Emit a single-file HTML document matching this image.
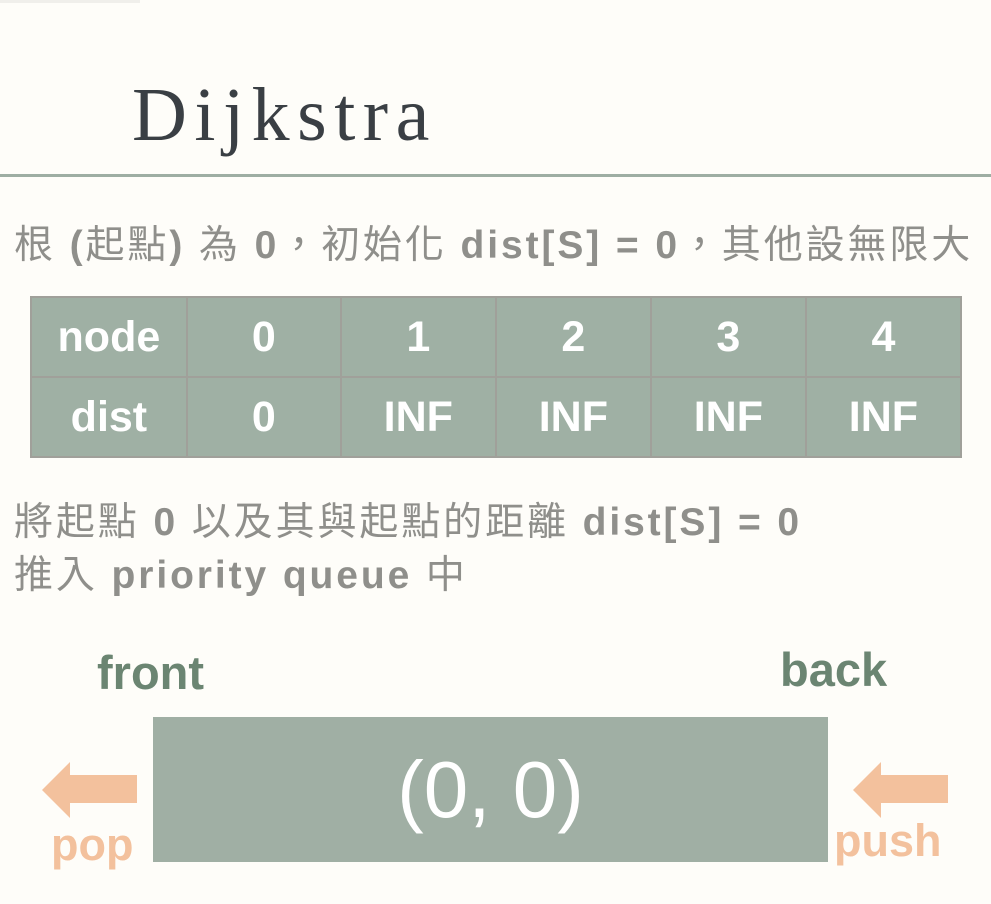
<!DOCTYPE html>
<html><head><meta charset="utf-8"><style>
body{margin:0;width:991px;height:904px;background:#fefdf9;position:relative;overflow:hidden;font-family:"Liberation Sans","Noto Sans CJK TC",sans-serif;}
.a{position:absolute;white-space:nowrap}
h1{position:absolute;left:132px;top:72px;margin:0;font:400 76px "Liberation Serif","DejaVu Serif",serif;color:#3a3f44;letter-spacing:7.5px}
.line{position:absolute;left:0;top:174px;width:991px;height:3px;background:#9eaea3}
.t{color:#8f8f8b;font-size:39px;letter-spacing:2.9px}
.t b{font-weight:700}
table{position:absolute;left:30px;top:296px;border-collapse:collapse;width:932px}
td{border:2px solid #a0a09a;background:#9fb0a4;color:#fff;font-weight:700;font-size:43px;text-align:center;width:155px;height:78px;padding:0}
.box{position:absolute;left:153px;top:717px;width:675px;height:145px;background:#a0afa4;color:#fff;font-size:80px;text-align:center;line-height:145px}
.g{color:#6b8572;font-weight:700;font-size:47px}
.o{color:#f3c19d;font-weight:700;font-size:45px}
</style></head><body>
<div class="a" style="left:0;top:0;width:140px;height:3px;background:#f0efeb"></div>
<h1>Dijkstra</h1>
<div class="line"></div>
<div class="a t" style="left:14px;top:214px">根 <b>(</b>起點<b>)</b> 為 <b>0</b>，初始化 <b>dist[S] = 0</b>，其他設無限大</div>
<table>
<tr><td>node</td><td>0</td><td>1</td><td>2</td><td>3</td><td>4</td></tr>
<tr><td>dist</td><td>0</td><td>INF</td><td>INF</td><td>INF</td><td>INF</td></tr>
</table>
<div class="a t" style="left:14px;top:496px;line-height:53px">將起點 <b>0</b> 以及其與起點的距離 <b>dist[S] = 0</b><br>推入 <b>priority queue</b> 中</div>
<div class="a g" style="left:97px;top:645px">front</div>
<div class="a g" style="left:780px;top:642px">back</div>
<div class="box">(0, 0)</div>
<svg class="a" style="left:0;top:0" width="991" height="904"><polygon fill="#f3c19d" points="42,790 70,762 70,775 137,775 137,803 70,803 70,818"/><polygon fill="#f3c19d" points="853,790 881,762 881,775 948,775 948,803 881,803 881,818"/></svg>
<div class="a o" style="left:51px;top:819px">pop</div>
<div class="a o" style="left:834px;top:815px">push</div>
</body></html>
